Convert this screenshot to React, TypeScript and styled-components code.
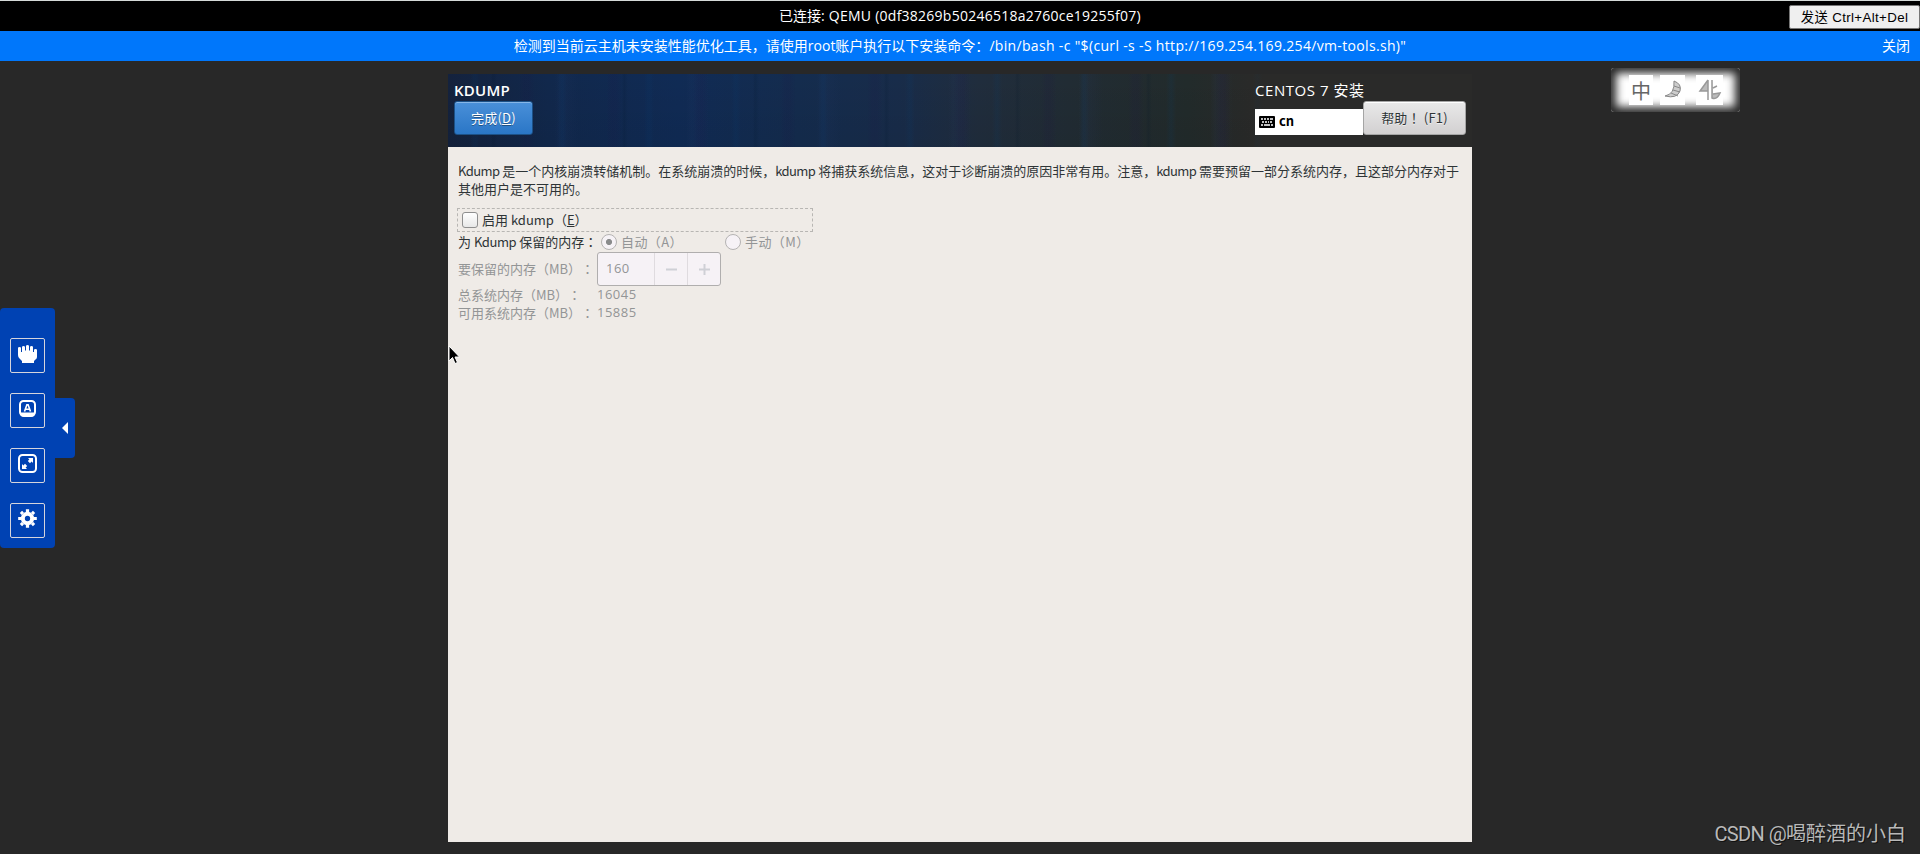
import React from "react";
import styled, { createGlobalStyle } from "styled-components";

const Global = createGlobalStyle`
  *{box-sizing:border-box}
  body{margin:0;background:#282828;overflow:hidden}
`;
const ui = `"Noto Sans CJK SC", sans-serif`;
const web = `"Open Sans","Noto Sans CJK SC",sans-serif`;

const Page = styled.div`
  height: 854px; display: flex; flex-direction: column; background: #282828;
  position: relative; overflow: hidden; font-family: ${web}; text-spacing-trim: space-all;
`;
const StatusBar = styled.header`
  height: 31px; flex: none; background: #000; border-top: 1px solid #d5dad8; color: #fff;
  display: grid; grid-template-columns: 1fr auto 1fr; align-items: center; font-size: 14px;
`;
const Title = styled.span`
  grid-column: 2; line-height: 20px; white-space: nowrap;
`;
const Spaced = styled.span<{ $ls: number }>`
  letter-spacing: ${p => p.$ls}px;
`;
/* Full-width punctuation set in the middle of its cell */
const Mid = styled.span`
  font-family: "Noto Sans CJK TC", sans-serif;
`;
const SendKeys = styled.button`
  justify-self: end; width: 131px; height: 24px; margin-top: 1px; padding: 0; background: #efefef;
  border: 1px solid #767676; border-radius: 2px; color: #000; white-space: nowrap; letter-spacing: .35px;
  font: 13.33px "Liberation Sans","Noto Sans CJK SC",sans-serif;
`;
const Notice = styled.div`
  height: 30px; flex: none; background: #0077fb; color: #fff; font-size: 14px;
  display: grid; grid-template-columns: 1fr auto 1fr; align-items: center;
`;
const Close = styled.span`
  justify-self: end; padding-right: 10px; line-height: 20px; margin-top: -1px;
`;
const Installer = styled.main`
  width: 1024px; height: 768px; margin: 13px auto 0; display: flex; flex-direction: column;
  background: #efebe7; font-family: ${ui}; font-size: 13px; color: #2e3436;
`;
const Banner = styled.div`
  height: 73px; flex: none; display: flex; justify-content: space-between; color: #fff; padding: 0 6px;
  background:
    linear-gradient(90deg, transparent 78%, #2a2a29 80%),
    repeating-linear-gradient(90deg, transparent 0 22px, rgba(0,70,130,.09) 26px 28px, transparent 32px 71px, rgba(30,20,70,.12) 76px 81px, transparent 87px),
    repeating-linear-gradient(90deg, transparent 0 43px, rgba(0,20,40,.14) 45px, transparent 49px 107px, rgba(40,60,110,.1) 112px 116px, transparent 131px),
    linear-gradient(180deg, transparent, rgba(0,0,0,.06)),
    linear-gradient(90deg, #14223d 0, #11284c 100px, #102b55 230px, #142c4e 350px, #182c4a 450px, #202d3d 530px, #212c34 620px, #222b2b 740px, #292a29 800px, #2a2a29 100%);
`;
const Side = styled.div`
  display: flex; flex-direction: column; padding-top: 6px;
`;
const Heading = styled.div<{ $bold?: boolean; $ls: number }>`
  height: 21px; line-height: 20px; font-size: 15px; white-space: nowrap;
  font-weight: ${p => (p.$bold ? 600 : 400)}; letter-spacing: ${p => p.$ls}px;
  font-family: "Open Sans", "Noto Sans CJK SC", sans-serif;
`;
const Button = styled.button<{ $primary?: boolean; $w: number }>`
  width: ${p => p.$w}px; height: 34px; padding: 0 0 2px; border-radius: 3px; white-space: nowrap;
  font: 13px ${ui}; letter-spacing: .2px; text-spacing-trim: space-all;
  color: ${p => (p.$primary ? "#fff" : "#2e3436")};
  border: 1px solid ${p => (p.$primary ? "#1c5187" : "#a5a5a5")};
  background: ${p => (p.$primary ? "linear-gradient(#4a90d9,#2a76c6)" : "linear-gradient(#e9e9e9,#d2d0d1)")};
  box-shadow: inset 0 1px ${p => (p.$primary ? "#86b6e8" : "#fff")};
  text-shadow: 0 1px ${p => (p.$primary ? "rgba(0,0,0,.35)" : "rgba(255,255,255,.6)")};
`;
const Tools = styled.div`
  display: flex; align-items: flex-end;
`;
const Layout = styled.div`
  width: 108px; height: 26px; background: #fff; color: #000; display: flex; align-items: center;
  gap: 4px; padding-left: 4px; font-weight: 700;
`;
const LayoutName = styled.span`
  padding-bottom: 3px;
`;
const Body = styled.section`
  padding: 15px 9px 0;
`;
const Intro = styled.p`
  margin: 0; padding-left: 1px; line-height: 18px; height: 46px; white-space: nowrap;
`;
const Enable = styled.label`
  width: 356px; height: 24px; border: 1px dashed #b8b6b3; display: flex; align-items: center;
  padding-left: 4px; gap: 4px;
`;
const Check = styled.span`
  width: 16px; height: 16px; border: 1px solid #8f8f8f; border-radius: 3px;
  background: linear-gradient(#fff,#e8e8e8);
`;
const Caption = styled.span`
  padding-bottom: 2px;
`;
const Row = styled.div<{ $h: number; $dim?: boolean }>`
  height: ${p => p.$h}px; display: flex; align-items: center; padding-left: 1px; white-space: nowrap;
  color: ${p => (p.$dim ? "#939596" : "#2e3436")};
`;
const Label = styled.span<{ $w: number }>`
  width: ${p => p.$w}px; padding-bottom: 2px;
`;
const Value = styled.span`
  font: 13px "Open Sans", sans-serif; letter-spacing: .5px; padding-bottom: 2px;
`;
const Option = styled.label<{ $w: number }>`
  width: ${p => p.$w}px; display: flex; align-items: center; gap: 4px; color: #939596;
`;
const OptionText = styled.span`
  padding-bottom: 2px; letter-spacing: .4px;
`;
const Radio = styled.span<{ $on?: boolean }>`
  width: 16px; height: 16px; border: 1px solid #b5b3b3; border-radius: 50%;
  background: ${p => (p.$on ? "radial-gradient(circle, #8a8b8c 0 2.7px, #f6f2f6 3.4px)" : "#f6f2f6")};
`;
const Spin = styled.div`
  width: 124px; height: 34px; border: 1px solid #b0aeae; border-radius: 3px; background: #f6f2f6;
  display: grid; grid-template-columns: 56px 33px 1fr; color: #939596;
`;
const SpinCell = styled.div<{ $text?: boolean }>`
  display: flex; align-items: center; justify-content: ${p => (p.$text ? "flex-start" : "center")};
  padding-left: ${p => (p.$text ? 8 : 0)}px;
  border-left: ${p => (p.$text ? "none" : "1px solid #dfdbdf")};
`;
const Dock = styled.nav`
  position: absolute; left: 0; top: 308px; width: 55px; height: 240px; background: #0042b3;
  border-radius: 4px; display: flex; flex-direction: column; align-items: center; padding-top: 30px; gap: 20px;
`;
const DockButton = styled.button`
  width: 35px; height: 35px; flex: none; padding: 0 0 4px; border: 1px solid #d5d5dc; border-radius: 2px;
  background: none; display: flex; align-items: center; justify-content: center;
`;
const Handle = styled.div`
  position: absolute; left: 54px; top: 90px; width: 21px; height: 60px; background: #0042b3;
  border-radius: 0 4px 4px 0; display: flex; align-items: center; justify-content: center;
`;
const Ime = styled.div`
  position: absolute; left: 1611px; top: 68px; width: 129px; height: 44px; display: flex;
  align-items: center; padding-left: 18px; border-radius: 3px; background: #fff;
  box-shadow: inset 0 0 8px 5px #282828;
`;
const Tile = styled.span<{ $w: number; $gap: number }>`
  width: ${p => p.$w}px; height: 30px; margin-right: ${p => p.$gap}px; background: #fff;
  display: flex; align-items: center; justify-content: center; color: #666;
  font: 20px "Noto Sans CJK SC", sans-serif;
`;
const Pointer = styled.svg`
  position: absolute; left: 448px; top: 345px;
`;
const Watermark = styled.div`
  position: absolute; right: 14px; top: 819px; line-height: 30px; color: #b9b9b9; white-space: nowrap;
  font-size: 20px; font-family: Roboto,"Noto Sans CJK SC",sans-serif;
  text-shadow: 1px 1px #111;
`;

const Keyboard = () => (
  <svg width="16" height="12" viewBox="0 0 16 12">
    <rect width="16" height="12" rx="1" fill="#000" />
    <path d="M2 3h2M5 3h2M8 3h2M11 3h3M3 6h2M6 6h2M9 6h1M11 6h2M2 9h2M5 9h6M12 9h2" stroke="#fff" strokeWidth="1.6" />
  </svg>
);
const Hand = () => (
  <svg width="19" height="18" viewBox="0 0 19 18" fill="#fff">
    <path d="M0 3Q0 2 1.500 2T3 3V7h1V2.200Q4 1 5.500 1T7 2.200V5.500h1V1.200Q8 0 9.500 0T11 1.200V5.500h1V2.200Q12 1 13.500 1T15 2.200V7h1V5Q16 4 17.500 4T19 5V12Q19 13.500 17.500 14.500L16 16V18H4V16L1.500 13.500Q0 12 0 10Z" />
  </svg>
);
const KeyA = () => (
  <svg width="17" height="17" viewBox="0 0 17 17">
    <rect x="1" y="1" width="15" height="14.500" rx="3.500" fill="none" stroke="#fff" strokeWidth="2" />
    <path d="M1 12.500h15v.5q0 4-4 4H5q-4 0-4-4Z" fill="#fff" />
    <path d="M5.500 11.500 7.900 4.800h1.200L11.500 11.500M6.500 9.300h4" fill="none" stroke="#fff" strokeWidth="1.600" />
  </svg>
);
const Expand = () => (
  <svg width="19" height="19" viewBox="0 0 19 19">
    <rect x="1" y="1" width="17" height="17" rx="3.500" fill="none" stroke="#fff" strokeWidth="2" />
    <path d="M10 4h5v5l-1.400-1.400L12 9.200 9.800 7l1.600-1.600ZM4 10l1.400 1.400L7 9.800 9.200 12l-1.600 1.600L9 15H4Z" fill="#fff" />
  </svg>
);
const Gear = () => (
  <svg width="19" height="19" viewBox="0 0 20 20" fill="none" stroke="#fff">
    <circle cx="10" cy="10" r="4.900" strokeWidth="4.200" />
    <path d="M10 .200v3M10 16.800v3M.200 10h3M16.800 10h3M3.100 3.100l2 2M14.900 14.900l2 2M3.100 16.900l2-2M14.900 5.100l2-2" strokeWidth="3.400" />
  </svg>
);

export default function App() {
  return (
    <Page>
      <Global />
      <StatusBar>
        <Title>已连接<Spaced $ls={0.25}>: QEMU (0df38269b50246518a2760ce19255f07)</Spaced></Title>
        <SendKeys>发送 Ctrl+Alt+Del</SendKeys>
      </StatusBar>
      <Notice>
        <Title>
          检测到当前云主机未安装性能优化工具，请使用root账户执行以下安装命令：<Spaced $ls={0.33}>/bin/bash -c "$(curl -s -S http://169.254.169.254/vm-tools.sh)"</Spaced>
        </Title>
        <Close>关闭</Close>
      </Notice>
      <Installer>
        <Banner>
          <Side>
            <Heading $bold $ls={0.25}>KDUMP</Heading>
            <Button $primary $w={79}>完成(<u>D</u>)</Button>
          </Side>
          <Side>
            <Heading $ls={0.55}>CENTOS 7 安装</Heading>
            <Tools>
              <Layout><Keyboard /><LayoutName>cn</LayoutName></Layout>
              <Button $w={103}>帮助<Mid>！</Mid> (F1)</Button>
            </Tools>
          </Side>
        </Banner>
        <Body>
          <Intro>
            <Spaced $ls={-0.6}>Kdump</Spaced> 是一个内核崩溃转储机制。在系统崩溃的时候，<Spaced $ls={-0.6}>kdump</Spaced> 将捕获系统信息，这对于诊断崩溃的原因非常有用。注意，<Spaced $ls={-0.6}>kdump</Spaced> 需要预留一部分系统内存，且这部分内存对于<br />
            其他用户是不可用的。
          </Intro>
          <Enable><Check /><Caption>启用 kdump（<u>E</u>）</Caption></Enable>
          <Row $h={20}>
            <Label $w={143}>为 <Spaced $ls={-0.4}>Kdump</Spaced> 保留的内存<Mid>：</Mid></Label>
            <Option $w={124}><Radio $on /><OptionText>自动（A）</OptionText></Option>
            <Option $w={100}><Radio /><OptionText>手动（M）</OptionText></Option>
          </Row>
          <Row $h={34} $dim>
            <Label $w={139}>要保留的内存（MB）<Mid>：</Mid></Label>
            <Spin>
              <SpinCell $text><Value>160</Value></SpinCell>
              <SpinCell><svg width="11" height="11" viewBox="0 0 11 11"><path d="M0 5.500h11" stroke="#cfd0d6" strokeWidth="2" /></svg></SpinCell>
              <SpinCell><svg width="11" height="11" viewBox="0 0 11 11"><path d="M0 5.500h11M5.500 0v11" stroke="#cfd0d6" strokeWidth="2" /></svg></SpinCell>
            </Spin>
          </Row>
          <Row $h={18} $dim><Label $w={139}>总系统内存（MB）<Mid>：</Mid></Label><Value>16045</Value></Row>
          <Row $h={18} $dim><Label $w={139}>可用系统内存（MB）<Mid>：</Mid></Label><Value>15885</Value></Row>
        </Body>
      </Installer>
      <Dock>
        <DockButton><Hand /></DockButton>
        <DockButton><KeyA /></DockButton>
        <DockButton><Expand /></DockButton>
        <DockButton><Gear /></DockButton>
        <Handle><svg width="6" height="12" viewBox="0 0 6 12"><path d="M6 0v12L0 6Z" fill="#fff" /></svg></Handle>
      </Dock>
      <Ime>
        <Tile $w={24} $gap={7}>中</Tile>
        <Tile $w={25} $gap={11}>
          <svg width="18" height="20" viewBox="0 0 18 20" fill="#ccc" stroke="#888"><path d="M10 1q8 3 6 10-3 8-15 5 10-2 9-15ZM10 6l6 2M9 10l7 2M7 13l7 3" /></svg>
        </Tile>
        <Tile $w={27} $gap={0}>
          <svg width="24" height="22" viewBox="0 0 24 22" fill="#bbb" stroke="#999" strokeWidth="1.500"><path d="M10 1 2 12h8v9M10 1v12M14 1v18q5 2 8-5l-7 1M15 9l4-2" /></svg>
        </Tile>
      </Ime>
      <Pointer width="12" height="20" viewBox="0 0 12 20"><path d="M1 1v15l3.500-3.500L7 18.500l2.500-1L7 12h4.500Z" fill="#000" stroke="#fff" /></Pointer>
      <Watermark><Spaced $ls={-0.6}>CSDN @</Spaced>喝醉酒的小白</Watermark>
    </Page>
  );
}
